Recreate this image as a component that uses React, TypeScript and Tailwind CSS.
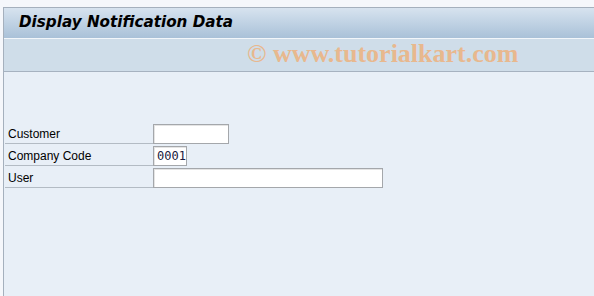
import React from "react";

type Field = {
  label: string;
  width: string;
  value?: string;
};

const fields: Field[] = [
  { label: "Customer", width: "w-[76px]" },
  { label: "Company Code", width: "w-[34px]", value: "0001" },
  { label: "User", width: "w-[230px]" },
];

function FieldRow({ field }: { field: Field }) {
  return (
    <div className="flex h-[20px] items-stretch">
      <div className="flex w-[148px] items-center border-b border-[#b3bbc4] pl-[3px] text-[12px] leading-none text-black">
        {field.label}
      </div>
      <div
        className={`${field.width} flex h-[20px] items-center border border-[#a4a7ab] bg-white pl-[3px] font-['DejaVu_Sans_Mono',monospace] text-[12px] text-[#1a1a40] shadow-[inset_1px_1px_0_#e4e4e4]`}
      >
        {field.value}
      </div>
    </div>
  );
}

export default function App() {
  return (
    <div className="h-[296px] w-[594px] overflow-hidden bg-[#f5f7fb] pl-[3px] pt-[7px] font-['Liberation_Sans',Arial,sans-serif]">
      <div className="flex h-full flex-col border-l border-t border-[#a5b0bd]">
        <header className="flex h-[31px] items-center border-b border-[#f2f6fa] bg-gradient-to-b from-[#d7e3ef] to-[#a9c1d8] pl-[15px]">
          <h1 className="font-['DejaVu_Sans',sans-serif] text-[15.2px] font-bold italic leading-none text-black">
            Display Notification Data
          </h1>
        </header>

        <div className="flex h-[33px] items-center border-b border-[#a6b2c0] bg-[#cfdde9] pb-[2px] pl-[243px]">
          <span className="font-['Liberation_Serif',serif] text-[26px] font-bold leading-none text-[#e8b88e]">
            © www.tutorialkart.com
          </span>
        </div>

        <main className="flex flex-1 flex-col gap-[2px] bg-[#e8eff7] pl-[1px] pt-[52px]">
          {fields.map((field) => (
            <FieldRow key={field.label} field={field} />
          ))}
        </main>
      </div>
    </div>
  );
}
